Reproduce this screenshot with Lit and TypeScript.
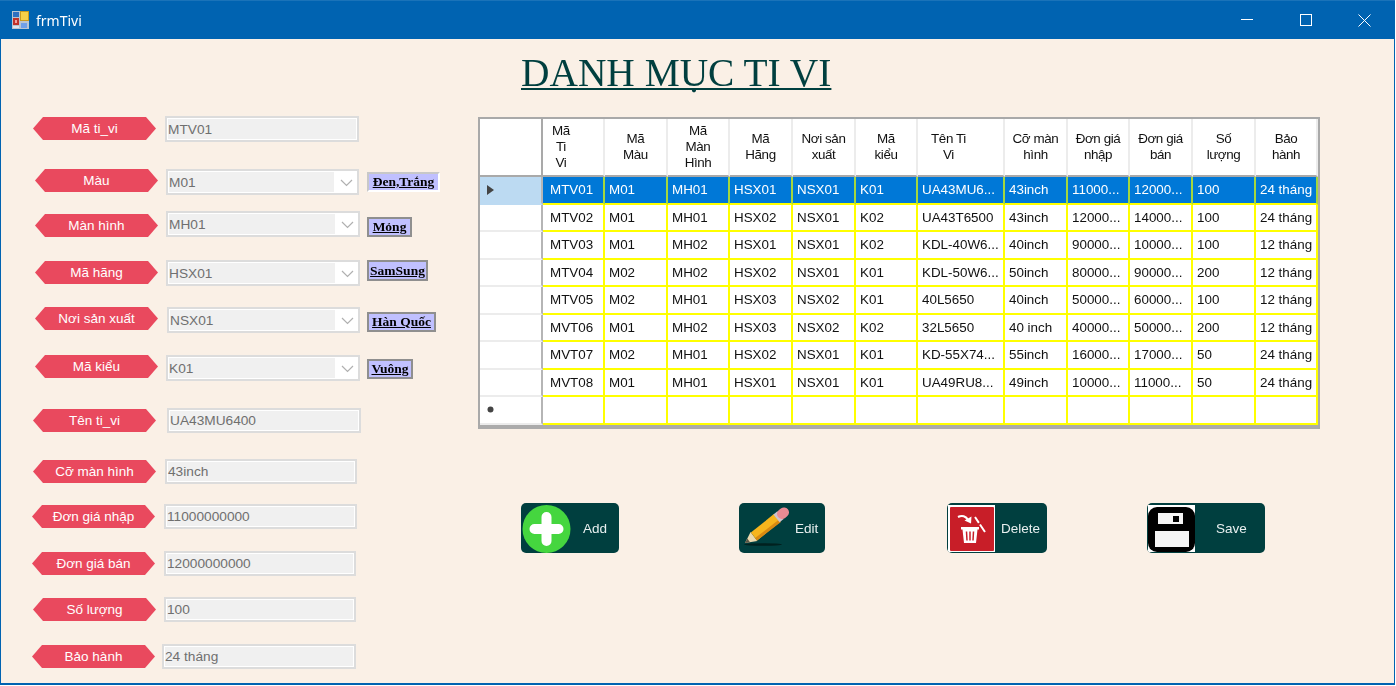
import { LitElement, html, css, svg } from "lit";
import { customElement } from "lit/decorators.js";

type Row = {
  label: string; value: string; y: number; lx: number; ly: number;
  fx: number; fw: number; fh: number; combo?: boolean;
  badge?: string; bx?: number; by?: number; bw?: number; bh?: number; raised?: boolean;
};

const ROWS: Row[] = [
  { label: "Mã ti_vi", value: "MTV01", y: 116, lx: 33, ly: 117, fx: 165, fw: 194, fh: 26 },
  { label: "Màu", value: "M01", y: 169, lx: 35, ly: 169, fx: 166, fw: 193, fh: 26, combo: true, badge: "Đen,Trắng", bx: 367, by: 172, bw: 73, bh: 20, raised: true },
  { label: "Màn hình", value: "MH01", y: 211, lx: 35, ly: 214, fx: 166, fw: 194, fh: 26, combo: true, badge: "Mỏng", bx: 367, by: 217, bw: 45, bh: 20 },
  { label: "Mã hãng", value: "HSX01", y: 260, lx: 35, ly: 261, fx: 166, fw: 194, fh: 26, combo: true, badge: "SamSung", bx: 367, by: 260, bw: 61, bh: 21 },
  { label: "Nơi sản xuất", value: "NSX01", y: 307, lx: 35, ly: 307, fx: 167, fw: 193, fh: 26, combo: true, badge: "Hàn Quốc", bx: 367, by: 312, bw: 69, bh: 20 },
  { label: "Mã kiểu", value: "K01", y: 355, lx: 35, ly: 355, fx: 166, fw: 194, fh: 26, combo: true, badge: "Vuông", bx: 367, by: 359, bw: 46, bh: 20 },
  { label: "Tên ti_vi", value: "UA43MU6400", y: 408, lx: 33, ly: 409, fx: 167, fw: 194, fh: 25 },
  { label: "Cỡ màn hình", value: "43inch", y: 459, lx: 33, ly: 460, fx: 165, fw: 192, fh: 25 },
  { label: "Đơn giá nhập", value: "11000000000", y: 504, lx: 32, ly: 505, fx: 164, fw: 193, fh: 25 },
  { label: "Đơn giá bán", value: "12000000000", y: 551, lx: 32, ly: 552, fx: 164, fw: 192, fh: 25 },
  { label: "Số lượng", value: "100", y: 597, lx: 33, ly: 598, fx: 164, fw: 192, fh: 25 },
  { label: "Bảo hành", value: "24 tháng", y: 644, lx: 32, ly: 645, fx: 162, fw: 194, fh: 25 },
];

const COLS = [
  { w: 62, h: ["Mã", "Ti", "Vi"], pad: 7, shift: 24 },
  { w: 63, h: ["Mã", "Màu"] },
  { w: 62, h: ["Mã", "Màn", "Hình"] },
  { w: 63, h: ["Mã", "Hãng"] },
  { w: 63, h: ["Nơi sản", "xuất"] },
  { w: 62, h: ["Mã", "kiểu"] },
  { w: 87, h: ["Tên Ti", "Vi"], shift: 24 },
  { w: 63, h: ["Cỡ màn", "hình"] },
  { w: 62, h: ["Đơn giá", "nhập"] },
  { w: 63, h: ["Đơn giá", "bán"] },
  { w: 63, h: ["Số", "lượng"] },
  { w: 62, h: ["Bảo", "hành"] },
];

const DATA = [
  ["MTV01", "M01", "MH01", "HSX01", "NSX01", "K01", "UA43MU6...", "43inch", "11000...", "12000...", "100", "24 tháng"],
  ["MTV02", "M01", "MH01", "HSX02", "NSX01", "K02", "UA43T6500", "43inch", "12000...", "14000...", "100", "24 tháng"],
  ["MTV03", "M01", "MH02", "HSX01", "NSX01", "K02", "KDL-40W6...", "40inch", "90000...", "10000...", "100", "12 tháng"],
  ["MTV04", "M02", "MH02", "HSX02", "NSX01", "K01", "KDL-50W6...", "50inch", "80000...", "90000...", "200", "12 tháng"],
  ["MTV05", "M02", "MH01", "HSX03", "NSX02", "K01", "40L5650", "40inch", "50000...", "60000...", "100", "12 tháng"],
  ["MVT06", "M01", "MH02", "HSX03", "NSX02", "K02", "32L5650", "40 inch", "40000...", "50000...", "200", "12 tháng"],
  ["MVT07", "M02", "MH01", "HSX02", "NSX01", "K01", "KD-55X74...", "55inch", "16000...", "17000...", "50", "24 tháng"],
  ["MVT08", "M01", "MH01", "HSX01", "NSX01", "K01", "UA49RU8...", "49inch", "10000...", "11000...", "50", "24 tháng"],
];

const addIcon = svg`<svg width="50" height="50" viewBox="0 0 50 50"><circle cx="25.500" cy="26" r="24" fill="#45d63f"/><path d="M25.500 14v24M13.500 26h24" stroke="#fff" stroke-width="10" stroke-linecap="round"/></svg>`;
const editIcon = svg`<svg width="52" height="50" viewBox="0 0 52 50">
  <ellipse cx="24" cy="41.500" rx="19" ry="1.300" fill="#00211f"/>
  <path d="M6 40l5.600-11.100 6.700 9.200z" fill="#ecd9ae"/>
  <path d="M6 40l2.300-4.500 2.700 3.700z" fill="#5c5546"/>
  <path d="M15 33.500L38 15" stroke="#f7b51d" stroke-width="10"/>
  <path d="M17 36.300L41 17.800" stroke="#d98a12" stroke-width="3"/>
  <path d="M37.500 15.400L41.500 12.200" stroke="#cfc3cd" stroke-width="10"/>
  <path d="M43 11L45 9.400" stroke="#ea8b94" stroke-width="10" stroke-linecap="round"/>
</svg>`;
const deleteIcon = svg`<svg class="img" width="47" height="47" viewBox="0 0 47 47"><rect width="47" height="47" fill="#fff"/><rect x="2" y="2" width="44" height="44" rx="1" fill="#c81e28"/>
  <path d="M10 12c4-2 8-1 10 3" fill="none" stroke="#fff" stroke-width="2.200"/><path d="M16.500 15.500l6.500 3 .5-7z" fill="#fff"/>
  <path d="M13 22h18v2.500h-1.500L28 38H16l-1.500-13.500H13z" fill="#fff"/><path d="M18.500 26.500l.5 9M22 26.500v9M25.500 26.500l-.5 9" stroke="#c81e28" stroke-width="1.500"/>
  <path d="M27 12l10 15" stroke="#fff" stroke-width="2" stroke-dasharray="7 2 9"/></svg>`;
const saveIcon = svg`<svg class="img" width="47" height="47" viewBox="0 0 47 47"><rect width="47" height="47" fill="#fff"/><rect y="2" width="47" height="45" rx="9" fill="#000"/><rect x="10" y="8" width="25" height="11" fill="#f5f5f5"/><rect x="25" y="11" width="6" height="6" fill="#000"/><rect x="7" y="26" width="34" height="16" fill="#f5f5f5"/></svg>`;

@customElement("tivi-label")
class TiviLabel extends LitElement {
  static styles = css`
    :host { display: block; width: 123px; height: 23px; }
    div {
      height: 100%;
      background: #e9495e;
      color: #fff;
      font: 13.500px "Liberation Sans", sans-serif;
      display: flex; align-items: center; justify-content: center;
      clip-path: polygon(0 50%, 10px 0, calc(100% - 10px) 0, 100% 50%, calc(100% - 10px) 100%, 10px 100%);
    }
  `;
  static properties = { text: { type: String } };
  text = "";
  render() { return html`<div>${this.text}</div>`; }
}

@customElement("app-root")
export class AppRoot extends LitElement {
  static styles = css`
    :host { display: block; width: 1396px; height: 686px; overflow: hidden; background: #fff; }
    .window { width: 1395px; height: 685px; box-sizing: border-box; border: 1px solid #0063b1; border-top: 0; border-bottom-width: 2px; background: #faf0e6; display: flex; flex-direction: column; }
    .titlebar { height: 39px; box-sizing: border-box; border-top: 1px solid #1a73b9; background: #0063b1; display: flex; align-items: center; color: #fff; flex: none; margin: 0 -1px; }
    .app-icon { margin-left: 12px; margin-right: 7px; }
    .title-text { font: 14px "Noto Sans", sans-serif; filter: blur(.3px); }
    .controls { margin-left: auto; margin-right: 1px; display: flex; }
    .controls button { width: 59px; height: 38px; border: 0; padding: 0; background: none; display: flex; align-items: center; justify-content: center; }
    .body { flex: 1; display: flex; min-height: 0; filter: blur(.3px); }
    .form { width: 477px; flex: none; padding-top: 77px; box-sizing: border-box; }
    .row { display: flex; align-items: flex-start; }
    .label { flex: none; }
    .field { flex: none; box-sizing: border-box; border: 2px solid #dcdcdc; padding: 1px; background: #fff; position: relative; }
    .inner { height: 100%; background: #f0f0f0; color: #6f6f6f; font: 13.700px "Liberation Sans", sans-serif; display: flex; align-items: center; box-sizing: border-box; }
    .combo { display: flex; }
    .combo .inner { flex: 1; margin-right: 22px; }
    .chev { position: absolute; right: 4px; top: 8px; }
    .badge { flex: none; box-sizing: border-box; background: #c0c0ff; border: 2px solid #8f8f8f; color: #000; font: bold 13.500px "Liberation Serif", serif; text-decoration: underline; display: flex; align-items: center; justify-content: center; white-space: nowrap; }
    .badge.raised { border-color: #c8c8c8 #fff #fff #c8c8c8; }
    .main { flex: 1; }
    h1 { margin: 11px 0 0 43px; height: 67px; box-sizing: border-box; font: 400 39.400px "Liberation Serif", serif; color: #003f3f; text-decoration: underline; text-decoration-thickness: 2px; text-underline-offset: 2px; text-decoration-skip-ink: none; white-space: nowrap; }
    .grid { width: 842px; height: 312px; box-sizing: border-box; background: #ababab; border: 2px solid #a9a9a9; border-bottom-width: 0; }
    .cols { display: grid; width: 838px; grid-template-rows: 58px repeat(9, 27.500px); background: #fff; font: 13.400px "Liberation Sans", sans-serif; color: #111; }
    .hcell { box-sizing: border-box; border-right: 2px solid #ececec; border-bottom: 2px solid #a9a9a9; display: flex; flex-direction: column; align-items: center; justify-content: center; line-height: 16px; letter-spacing: -.4px; }
    .hcell.corner { border-right-color: #a9a9a9; }
    .rh { box-sizing: border-box; border-right: 2px solid #b5b5b5; border-bottom: 2px solid #ececec; display: flex; align-items: center; padding-left: 7px; }
    .rh.cur { background: #bcdaf2; border-bottom-color: #bcdaf2; }
    .cell { box-sizing: border-box; border-right: 2px solid #ffff00; border-bottom: 2px solid #ffff00; display: flex; align-items: center; padding-left: 4px; white-space: nowrap; overflow: hidden; }
    .cell.sel { background: #0078d7; color: #fff; border-right-color: #a4d73e; }
    .actions { display: flex; margin-top: 74px; }
    .btn { height: 50px; flex: none; box-sizing: border-box; background: #003f3f; border-radius: 5px; display: flex; align-items: center; color: #e8f0f0; font: 13.500px "Liberation Sans", sans-serif; border: 0; padding: 0; overflow: hidden; }
    .btn .img { align-self: flex-start; margin: 2px 0 0 1px; flex: none; }
  `;

  private renderRow(r: Row, i: number) {
    const next = ROWS[i + 1];
    const h = next ? next.y - r.y : 30;
    const gap = r.bx ? r.bx - r.fx - r.fw : 0;
    return html`<div class="row" style="height:${h}px;padding-left:${r.lx - 1}px">
      <tivi-label class="label" .text=${r.label} style="margin-top:${r.ly - r.y}px"></tivi-label>
      ${r.combo
        ? html`<div class="field combo" style="margin-left:${r.fx - r.lx - 123}px;width:${r.fw}px;height:${r.fh}px">
            <div class="inner">${r.value}</div>
            <svg class="chev" width="13" height="8" viewBox="0 0 13 8"><path d="M1 1l5.500 5.500L12 1" fill="none" stroke="#b0b0b0" stroke-width="1.200"/></svg>
          </div>`
        : html`<div class="field" style="margin-left:${r.fx - r.lx - 123}px;width:${r.fw}px;height:${r.fh}px"><div class="inner">${r.value}</div></div>`}
      ${r.badge
        ? html`<div class="badge ${r.raised ? "raised" : ""}" style="margin-left:${gap}px;margin-top:${r.by! - r.y}px;width:${r.bw}px;height:${r.bh}px">${r.badge}</div>`
        : ""}
    </div>`;
  }

  render() {
    const template = COLS.map((c) => c.w + "px").join(" ");
    return html`<div class="window">
      <div class="titlebar">
        <svg class="app-icon" width="17" height="18" viewBox="0 0 17 18"><rect width="17" height="18" fill="#b9c4d2"/><rect x="1" y="1" width="6" height="5" fill="#2f6fc0"/><rect x="1" y="7" width="6" height="7" fill="#c0322a"/><rect x="3" y="9" width="2" height="3" fill="#f0a0a0"/><rect x="8" y="0" width="9" height="10" fill="#c89b20"/><rect x="9" y="1" width="7" height="8" fill="#f7d048"/><rect x="9" y="12" width="6" height="5" fill="#6f9fe8"/><rect x="1" y="15" width="6" height="2" fill="#dfe5ec"/></svg>
        <span class="title-text">frmTivi</span>
        <div class="controls">
          <button><svg width="12" height="2"><rect width="12" height="1" fill="#fff"/></svg></button>
          <button><svg width="12" height="12"><rect x=".5" y=".5" width="11" height="11" fill="none" stroke="#fff"/></svg></button>
          <button><svg width="13" height="13"><path d="M.5.5l12 12M12.500.5l-12 12" stroke="#fff"/></svg></button>
        </div>
      </div>
      <div class="body">
        <div class="form">${ROWS.map((r, i) => this.renderRow(r, i))}</div>
        <div class="main">
          <h1>DANH MỤC TI VI</h1>
          <div class="grid">
            <div class="cols" style="grid-template-columns:63px ${template}">
              <div class="hcell corner"></div>
              ${COLS.map((c) => html`<div class="hcell" style="padding-right:${c.shift ?? 0}px">${c.h.map((t) => html`<span>${t}</span>`)}</div>`)}
              ${DATA.map((row, ri) => html`
                <div class="rh ${ri === 0 ? "cur" : ""}">${ri === 0 ? html`<svg width="7" height="10"><path d="M0 0l7 5-7 5z" fill="#444"/></svg>` : ""}</div>
                ${row.map((v, ci) => html`<div class="cell ${ri === 0 ? "sel" : ""}" style="padding-left:${COLS[ci].pad ?? 4}px">${v}</div>`)}
              `)}
              <div class="rh"><svg width="7" height="7"><circle cx="3.500" cy="3.500" r="3" fill="#444"/></svg></div>
              ${COLS.map(() => html`<div class="cell"></div>`)}
            </div>
          </div>
          <div class="actions">
            <button class="btn" style="width:98px;margin-left:43px">${addIcon}<span style="margin-left:12px">Add</span></button>
            <button class="btn" style="width:86px;margin-left:120px">${editIcon}<span style="margin-left:4px">Edit</span></button>
            <button class="btn" style="width:100px;margin-left:122px">${deleteIcon}<span style="margin-left:6px">Delete</span></button>
            <button class="btn" style="width:118px;margin-left:100px">${saveIcon}<span style="margin-left:21px">Save</span></button>
          </div>
        </div>
      </div>
    </div>`;
  }
}
